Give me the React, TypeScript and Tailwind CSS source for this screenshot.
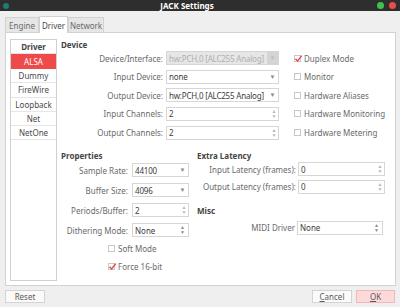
import React from "react";

function Check({ checked }: { checked?: boolean }) {
  return (
    <span className="relative inline-block w-[7px] h-[7px] border border-[#c8c8c8] bg-white shrink-0">
      {checked && (
        <svg className="absolute left-[-1px] top-[-2px]" width="9" height="9" viewBox="0 0 9 9">
          <path d="M1.5 4.8 L3.6 7 L7.8 1.6" stroke="#e8413f" strokeWidth="1.3" fill="none" />
        </svg>
      )}
    </span>
  );
}

function CheckRow({ label, checked }: { label: string; checked?: boolean }) {
  return (
    <div className="flex items-center h-[14px] gap-[3px] text-[#6a6a6a]">
      <Check checked={checked} />
      <span>{label}</span>
    </div>
  );
}

function Arrow() {
  return <span className="text-[6px] text-[#8a8a8a] leading-none">▼</span>;
}

function Combo({ value, w, disabled }: { value: string; w: string; disabled?: boolean }) {
  if (disabled) {
    return (
      <div className={`${w} h-[14px] border border-[#d6d6d6] bg-[#e6e6e6] flex items-center`}>
        <span className="flex-1 pl-[2px] text-[#b0b0b0] whitespace-nowrap overflow-hidden tracking-[-0.2px]">{value}</span>
        <span className="w-[11px] h-full bg-[#d4d4d4] flex items-center justify-center shrink-0">
          <span className="text-[6px] text-[#bdbdbd] leading-none">▼</span>
        </span>
      </div>
    );
  }
  return (
    <div className={`${w} h-[14px] border border-[#d6d6d6] bg-white flex items-center`}>
      <span className="flex-1 pl-[2px] text-[#3c3c3c] whitespace-nowrap overflow-hidden tracking-[-0.2px]">{value}</span>
      <span className="w-[11px] flex items-center justify-center shrink-0">
        <Arrow />
      </span>
    </div>
  );
}

function UpDown({ light }: { light?: boolean }) {
  return (
    <span className={`w-[8px] h-full flex flex-col items-center justify-center text-[5px] leading-[5px] ${light ? "text-[#b8b8b8]" : "text-[#8a8a8a]"}`}>
      <span>▲</span>
      <span>▼</span>
    </span>
  );
}

function Spin({ value, w }: { value: string; w: string }) {
  return (
    <div className={`${w} h-[14px] border border-[#d6d6d6] bg-white flex items-center`}>
      <span className="flex-1 pl-[2px] text-[#3c3c3c]">{value}</span>
      <UpDown light />
    </div>
  );
}

function UpDownCombo({ value, w }: { value: string; w: string }) {
  return (
    <div className={`${w} h-[14px] border border-[#d6d6d6] bg-white flex items-center`}>
      <span className="flex-1 pl-[2px] text-[#3c3c3c]">{value}</span>
      <span className="w-[11px] h-full flex items-center justify-center">
        <UpDown />
      </span>
    </div>
  );
}

function Row({ label, lw, gap, children }: { label: string; lw: string; gap: string; children: React.ReactNode }) {
  return (
    <div className={`flex items-center h-[14px] ${gap}`}>
      <span className={`${lw} text-right text-[#6a6a6a] whitespace-nowrap`}>{label}</span>
      {children}
    </div>
  );
}

export default function App() {
  const drivers = ["Dummy", "FireWire", "Loopback", "Net", "NetOne"];
  return (
    <div className="w-[400px] h-[307px] bg-[#efefef] flex flex-col overflow-hidden font-['Noto_Sans','Open_Sans',sans-serif] text-[8px] leading-[11px]">
      {/* Title bar */}
      <div className="h-[11px] bg-[#2e2e2e] flex items-center relative shrink-0">
        <span className="ml-[3px] w-[6px] h-[6px] rounded-full bg-[#1d7c74]" />
        <div className="flex-1 flex justify-center pr-[12px] text-white font-bold text-[8px] leading-[11px]">JACK Settings</div>
        <span className="w-[7px] h-[7px] rounded-full bg-[#3fc24a]" />
        <span className="ml-[5px] mr-[4px] w-[7px] h-[7px] rounded-full bg-[#ea4b4b]" />
      </div>

      {/* Tabs */}
      <div className="h-[21px] flex items-end pl-[5px] shrink-0 relative z-10">
        <div className="w-[34px] h-[15px] border border-[#d2d2d2] border-b-0 bg-[#e6e6e6] text-[#6a6a6a] flex items-center justify-center">Engine</div>
        <div className="w-[29px] h-[17px] mb-[-1px] border border-[#d2d2d2] border-b-0 bg-white text-[#4a4a4a] flex items-center justify-center">Driver</div>
        <div className="w-[36px] h-[15px] border border-[#d2d2d2] border-b-0 bg-[#e6e6e6] text-[#6a6a6a] flex items-center justify-center">Network</div>
      </div>

      {/* Panel */}
      <div className="ml-[5px] mr-[4px] h-[254px] bg-white border border-[#d2d2d2] flex shrink-0 pt-[6px]">
        {/* Driver list */}
        <div className="ml-[4px] w-[47px] h-[242px] border border-[#d0d0d0] flex flex-col shrink-0">
          <div className="h-[14px] flex items-center justify-center font-bold text-[#444] border-b border-[#e2e2e2]">Driver</div>
          <div className="h-[15px] flex items-center justify-center bg-[#ee4a4a] text-white">ALSA</div>
          {drivers.map((d) => (
            <div key={d} className="h-[14.3px] flex items-center justify-center text-[#4a4a4a] border-b border-[#e6e6e6]">
              {d}
            </div>
          ))}
        </div>

        {/* Main */}
        <div className="ml-[4px] flex flex-col">
          <div className="h-[11px] font-bold text-[#444]">Device</div>
          <div className="mt-[1px] flex flex-col gap-[4.67px]">
            <div className="flex items-center">
              <Row label="Device/Interface:" lw="w-[102px]" gap="gap-[3px]">
                <Combo value="hw:PCH,0 [ALC255 Analog]" w="w-[113px]" disabled />
              </Row>
              <div className="ml-[15px]"><CheckRow label="Duplex Mode" checked /></div>
            </div>
            <div className="flex items-center">
              <Row label="Input Device:" lw="w-[102px]" gap="gap-[3px]">
                <Combo value="none" w="w-[113px]" />
              </Row>
              <div className="ml-[15px]"><CheckRow label="Monitor" /></div>
            </div>
            <div className="flex items-center">
              <Row label="Output Device:" lw="w-[102px]" gap="gap-[3px]">
                <Combo value="hw:PCH,0 [ALC255 Analog]" w="w-[113px]" />
              </Row>
              <div className="ml-[15px]"><CheckRow label="Hardware Aliases" /></div>
            </div>
            <div className="flex items-center">
              <Row label="Input Channels:" lw="w-[102px]" gap="gap-[3px]">
                <Spin value="2" w="w-[113px]" />
              </Row>
              <div className="ml-[15px]"><CheckRow label="Hardware Monitoring" /></div>
            </div>
            <div className="flex items-center">
              <Row label="Output Channels:" lw="w-[102px]" gap="gap-[3px]">
                <Spin value="2" w="w-[113px]" />
              </Row>
              <div className="ml-[15px]"><CheckRow label="Hardware Metering" /></div>
            </div>
          </div>

          <div className="mt-[10px] flex">
            {/* Properties */}
            <div className="w-[136px] flex flex-col">
              <div className="h-[11px] font-bold text-[#444]">Properties</div>
              <div className="mt-[2.5px] flex flex-col gap-[6px]">
                <Row label="Sample Rate:" lw="w-[67px]" gap="gap-[4px]">
                  <Combo value="44100" w="w-[57px]" />
                </Row>
                <Row label="Buffer Size:" lw="w-[67px]" gap="gap-[4px]">
                  <Combo value="4096" w="w-[57px]" />
                </Row>
                <Row label="Periods/Buffer:" lw="w-[67px]" gap="gap-[4px]">
                  <Spin value="2" w="w-[57px]" />
                </Row>
                <Row label="Dithering Mode:" lw="w-[67px]" gap="gap-[4px]">
                  <UpDownCombo value="None" w="w-[57px]" />
                </Row>
              </div>
              <div className="mt-[4px] ml-[47px] flex flex-col gap-[4px]">
                <CheckRow label="Soft Mode" />
                <CheckRow label="Force 16-bit" checked />
              </div>
            </div>

            {/* Extra latency + Misc */}
            <div className="flex flex-col">
              <div className="h-[11px] font-bold text-[#444]">Extra Latency</div>
              <div className="mt-[1.5px] flex flex-col gap-[3.7px]">
                <Row label="Input Latency (frames):" lw="w-[99px]" gap="gap-[2px]">
                  <Spin value="0" w="w-[87px]" />
                </Row>
                <Row label="Output Latency (frames):" lw="w-[99px]" gap="gap-[2px]">
                  <Spin value="0" w="w-[87px]" />
                </Row>
              </div>
              <div className="mt-[10.8px] h-[11px] font-bold text-[#444]">Misc</div>
              <div className="mt-[5.2px]">
                <Row label="MIDI Driver" lw="w-[98px]" gap="gap-[2px]">
                  <UpDownCombo value="None" w="w-[86px]" />
                </Row>
              </div>
            </div>
          </div>
        </div>
      </div>

      {/* Buttons */}
      <div className="mt-[4px] h-[13px] flex items-center px-[5px] shrink-0">
        <div className="w-[40px] h-[13px] border border-[#d4d4d4] bg-[#fafafa] text-[#5a5a5a] flex items-center justify-center">Reset</div>
        <div className="flex-1" />
        <div className="w-[40px] h-[13px] border border-[#d4d4d4] bg-[#fafafa] text-[#5a5a5a] flex items-center justify-center">
          <span><span className="underline">C</span>ancel</span>
        </div>
        <div className="ml-[4px] w-[39px] h-[13px] border border-[#f3b7b7] bg-[#fdd9d9] text-[#5a5a5a] flex items-center justify-center">
          <span><span className="underline">O</span>K</span>
        </div>
      </div>
    </div>
  );
}
